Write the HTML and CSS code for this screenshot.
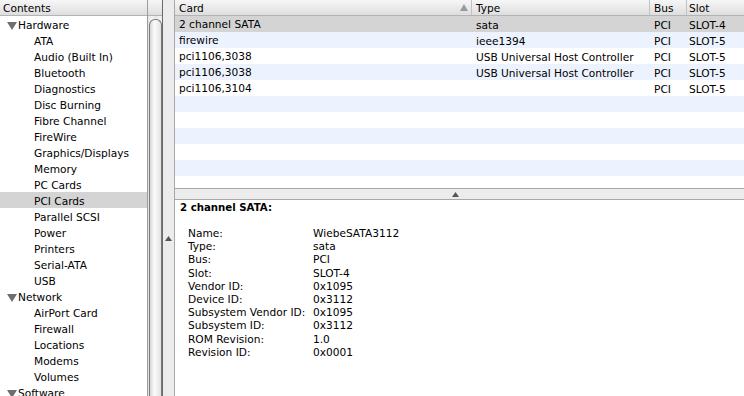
FILE: index.html
```html
<!DOCTYPE html>
<html lang="en">
<head>
    <meta charset="UTF-8">
    <title>System Profiler</title>
    <link rel="stylesheet" href="styles.css">
</head>
<body>
    <div class="app">
        <!-- Contents sidebar -->
        <div class="sidebar">
            <div class="sidebar-list">
                <div class="list-header">Contents</div>
                <div class="group"><svg class="disclosure" width="10" height="8" viewBox="0 0 10 8"><polygon points="0,0 10,0 5,8" fill="#6e6e6e"/></svg>Hardware</div>
                <div class="item">ATA</div>
                <div class="item">Audio (Built In)</div>
                <div class="item">Bluetooth</div>
                <div class="item">Diagnostics</div>
                <div class="item">Disc Burning</div>
                <div class="item">Fibre Channel</div>
                <div class="item">FireWire</div>
                <div class="item">Graphics/Displays</div>
                <div class="item">Memory</div>
                <div class="item">PC Cards</div>
                <div class="item selected">PCI Cards</div>
                <div class="item">Parallel SCSI</div>
                <div class="item">Power</div>
                <div class="item">Printers</div>
                <div class="item">Serial-ATA</div>
                <div class="item">USB</div>
                <div class="group"><svg class="disclosure" width="10" height="8" viewBox="0 0 10 8"><polygon points="0,0 10,0 5,8" fill="#6e6e6e"/></svg>Network</div>
                <div class="item">AirPort Card</div>
                <div class="item">Firewall</div>
                <div class="item">Locations</div>
                <div class="item">Modems</div>
                <div class="item">Volumes</div>
                <div class="group"><svg class="disclosure" width="10" height="8" viewBox="0 0 10 8"><polygon points="0,0 10,0 5,8" fill="#6e6e6e"/></svg>Software</div>
            </div>
            <div class="scrollbar">
                <div class="scroll-head"></div>
                <div class="scroll-thumb"></div>
            </div>
        </div>

        <!-- Vertical splitter -->
        <div class="vsplit">
            <svg class="nub" width="7" height="5" viewBox="0 0 7 5"><polygon points="0,5 3.5,0 7,5" fill="#555"/></svg>
        </div>

        <!-- Cards table and details -->
        <div class="main">
            <div class="table-pane">
                <div class="row head">
                    <div class="cell c-card">Card<svg class="sort" width="8" height="7" viewBox="0 0 8 7"><polygon points="0,7 4,0 8,7" fill="#9a9a9a"/></svg></div>
                    <div class="cell c-type">Type</div>
                    <div class="cell c-bus">Bus</div>
                    <div class="cell c-slot">Slot</div>
                </div>
                <div class="row selected">
                    <div class="cell c-card">2 channel SATA</div>
                    <div class="cell c-type">sata</div>
                    <div class="cell c-bus">PCI</div>
                    <div class="cell c-slot">SLOT-4</div>
                </div>
                <div class="row">
                    <div class="cell c-card">firewire</div>
                    <div class="cell c-type">ieee1394</div>
                    <div class="cell c-bus">PCI</div>
                    <div class="cell c-slot">SLOT-5</div>
                </div>
                <div class="row">
                    <div class="cell c-card">pci1106,3038</div>
                    <div class="cell c-type">USB Universal Host Controller</div>
                    <div class="cell c-bus">PCI</div>
                    <div class="cell c-slot">SLOT-5</div>
                </div>
                <div class="row">
                    <div class="cell c-card">pci1106,3038</div>
                    <div class="cell c-type">USB Universal Host Controller</div>
                    <div class="cell c-bus">PCI</div>
                    <div class="cell c-slot">SLOT-5</div>
                </div>
                <div class="row">
                    <div class="cell c-card">pci1106,3104</div>
                    <div class="cell c-type"></div>
                    <div class="cell c-bus">PCI</div>
                    <div class="cell c-slot">SLOT-5</div>
                </div>
                <div class="row"></div>
                <div class="row"></div>
                <div class="row"></div>
                <div class="row"></div>
                <div class="row"></div>
                <div class="row"></div>
            </div>

            <div class="hsplit">
                <svg class="nub" width="7" height="5" viewBox="0 0 7 5"><polygon points="0,5 3.5,0 7,5" fill="#555"/></svg>
            </div>

            <div class="details">
                <h2>2 channel SATA:</h2>
                <dl class="props">
                    <dt>Name:</dt><dd>WiebeSATA3112</dd>
                    <dt>Type:</dt><dd>sata</dd>
                    <dt>Bus:</dt><dd>PCI</dd>
                    <dt>Slot:</dt><dd>SLOT-4</dd>
                    <dt>Vendor ID:</dt><dd>0x1095</dd>
                    <dt>Device ID:</dt><dd>0x3112</dd>
                    <dt>Subsystem Vendor ID:</dt><dd>0x1095</dd>
                    <dt>Subsystem ID:</dt><dd>0x3112</dd>
                    <dt>ROM Revision:</dt><dd>1.0</dd>
                    <dt>Revision ID:</dt><dd>0x0001</dd>
                </dl>
            </div>
        </div>
    </div>
</body>
</html>
```

FILE: styles.css
```css
body {
    margin: 0;
    padding: 0;
    font-family: "DejaVu Sans", sans-serif;
    font-size: 10.6px;
    color: #000;
    background-color: #ececec;
}

.app {
    display: flex;
    width: 744px;
    height: 396px;
    overflow: hidden;
}

/* Sidebar */
.sidebar {
    display: flex;
    width: 163px;
    background-color: #fff;
    flex-shrink: 0;
}

.sidebar-list {
    width: 148px;
    border-right: 1px solid #9c9c9c;
}

.list-header {
    height: 15px;
    line-height: 16px;
    padding-left: 3px;
    border-bottom: 1px solid #b4b4b4;
    background: linear-gradient(#f6f6f6, #dedede);
}

.group,
.item {
    height: 16px;
    line-height: 19px;
    white-space: nowrap;
}

.group {
    padding-left: 7px;
}

.disclosure {
    margin-right: 1px;
    vertical-align: -1px;
}

.item {
    padding-left: 34px;
}

.item.selected {
    background-color: #d4d4d4;
}

.scrollbar {
    width: 14px;
    display: flex;
    flex-direction: column;
    background: repeating-linear-gradient(90deg, #e4e4e4 0, #f4f4f4 4px, #e4e4e4 8px);
    border-right: 1px solid #6a6a6a;
}

.scroll-head {
    height: 16px;
    border-bottom: 1px solid #b4b4b4;
    background: linear-gradient(#f6f6f6, #dedede);
    box-sizing: border-box;
}

.scroll-thumb {
    flex: 1;
    margin: 3px 0 0 1px;
    border: 1px solid #7a7a7a;
    border-bottom: none;
    border-radius: 6px 6px 0 0;
    background: linear-gradient(90deg, #d8d8d8, #fbfbfb 40%, #e2e2e2);
}

/* Splitters */
.vsplit {
    width: 11px;
    flex-shrink: 0;
    display: flex;
    align-items: center;
    justify-content: center;
    background-color: #ececec;
    border-right: 1px solid #a8a8a8;
}

.vsplit .nub {
    margin-top: 80px;
}

.hsplit {
    height: 10px;
    display: flex;
    justify-content: center;
    align-items: center;
    background-color: #ececec;
    border-top: 1px solid #a8a8a8;
    border-bottom: 1px solid #a8a8a8;
}

.hsplit .nub {
    margin-left: -8px;
}

/* Table */
.main {
    flex: 1;
    display: flex;
    flex-direction: column;
}

.table-pane {
    height: 188px;
    overflow: hidden;
    background-color: #fff;
}

.row {
    display: flex;
    height: 16px;
    line-height: 19px;
    white-space: nowrap;
}

.row:nth-child(odd) {
    background-color: #edf3fe;
}

.row.head {
    height: 15px;
    line-height: 16px;
    border-bottom: 1px solid #b4b4b4;
    background: linear-gradient(#f6f6f6, #dedede);
}

.row.selected {
    background-color: #d4d4d4;
}

.cell {
    padding-left: 4px;
    box-sizing: border-box;
    overflow: hidden;
}

.head .cell {
    border-right: 1px solid #c2c2c2;
}

.c-card {
    width: 297px;
    display: flex;
    align-items: center;
}

.sort {
    margin-left: auto;
    margin-right: 3px;
}

.c-type {
    width: 178px;
}

.c-bus {
    width: 37px;
}

.c-slot {
    flex: 1;
    padding-left: 2px;
}

.head .c-slot {
    border-right: none;
}

/* Details */
.details {
    flex: 1;
    background-color: #fff;
    padding: 0 5px;
}

.details h2 {
    margin: 0;
    font-size: 10.2px;
    line-height: 16px;
}

.props {
    display: grid;
    grid-template-columns: 125px auto;
    margin: 11px 0 0 8px;
    line-height: 13.2px;
}

.props dt,
.props dd {
    margin: 0;
}
```
